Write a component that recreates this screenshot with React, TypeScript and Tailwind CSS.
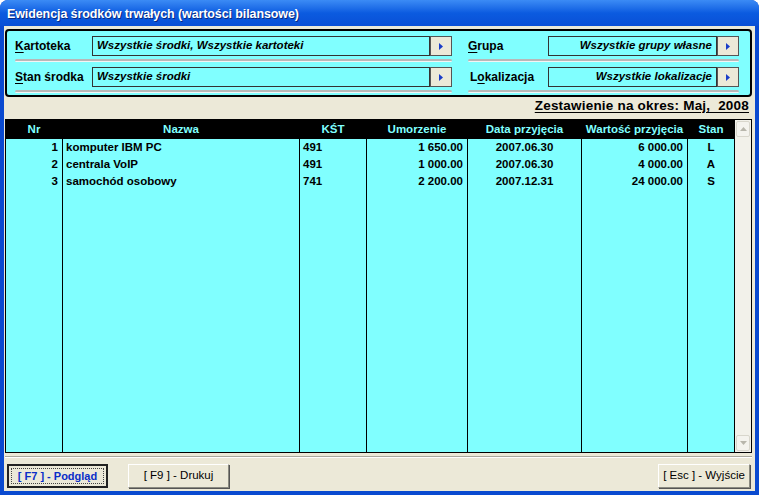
import React from "react";

const cols = [
  { title: "Nr", w: 57, align: "right", cells: ["1", "2", "3"] },
  { title: "Nazwa", w: 237, align: "left", cells: ["komputer IBM PC", "centrala VoIP", "samochód osobowy"] },
  { title: "KŚT", w: 67, align: "left", cells: ["491", "491", "741"] },
  { title: "Umorzenie", w: 101, align: "right", cells: ["1 650.00", "1 000.00", "2 200.00"] },
  { title: "Data przyjęcia", w: 114, align: "center", cells: ["2007.06.30", "2007.06.30", "2007.12.31"] },
  { title: "Wartość przyjęcia", w: 106, align: "right", cells: ["6 000.00", "4 000.00", "24 000.00"] },
  { title: "Stan", w: 47, align: "center", cells: ["L", "A", "S"] },
];

function Arrow() {
  return (
    <div className="w-[22px] h-[20px] border border-[#555] bg-[#ECE9D8] flex items-center justify-center shrink-0">
      <svg width="5" height="7" viewBox="0 0 5 7">
        <polygon points="0,0 4,3.5 0,7" fill="#1a3cc8" />
      </svg>
    </div>
  );
}

function Sep() {
  return <div className="mt-[3px] h-[3px] rounded-[2px] bg-[#b8b8b8] border-b border-[#f4f4f4]" />;
}

function Field({ ul, rest, value, labelW, right }: { ul: string; rest: string; value: string; labelW: number; right?: boolean }) {
  return (
    <div>
      <div className="flex h-[20px]">
        <div className="flex items-center text-[12px] font-bold text-black" style={{ width: labelW }}>
          <span className="underline underline-offset-[2px]">{ul}</span>
          <span>{rest}</span>
        </div>
        <div className={`flex-1 h-[20px] border border-[#333] flex items-center px-[4px] text-[11.5px] font-bold italic text-black ${right ? "justify-end" : "justify-start"}`}>
          {value}
        </div>
        <Arrow />
      </div>
      <Sep />
    </div>
  );
}

export default function App() {
  return (
    <div
      className="w-[759px] h-[495px] bg-[#0a4ad0] flex flex-col overflow-hidden rounded-t-[8px]"
      style={{ fontFamily: '"Liberation Sans", Arial, sans-serif' }}
    >
      <div className="h-[26px] shrink-0 bg-gradient-to-b from-[#3b8bf5] via-[#0b5be0] to-[#0a4fd6] flex items-center pl-[7px] pt-[3px]">
        <span className="text-white font-bold text-[12.5px] tracking-[-0.1px]" style={{ textShadow: "1px 1px 0 #0a2a80" }}>
          Ewidencja środków trwałych (wartości bilansowe)
        </span>
      </div>
      <div className="flex-1 mx-[4px] mb-[4px] bg-[#ECE9D8] flex flex-col">
        {/* filter panel */}
        <div className="mt-[3px] ml-[1px] mr-[3px] h-[68px] border-2 border-black rounded-[4px] bg-[#80FFFF] pl-[8px] pr-[11px] pt-[5px] flex gap-[16px]">
          <div className="w-[437px] flex flex-col gap-[5px]">
            <Field ul="K" rest="artoteka" value="Wszystkie środki, Wszystkie kartoteki" labelW={77} />
            <Field ul="S" rest="tan środka" value="Wszystkie środki" labelW={77} />
          </div>
          <div className="flex-1 flex flex-col gap-[5px]">
            <Field ul="G" rest="rupa" value="Wszystkie grupy własne" labelW={80} right />
            <div>
              <div className="flex h-[20px]">
                <div className="flex items-center text-[12px] font-bold text-black pl-[2px]" style={{ width: 80 }}>
                  <span>L</span>
                  <span className="underline underline-offset-[2px]">o</span>
                  <span>kalizacja</span>
                </div>
                <div className="flex-1 h-[20px] border border-[#333] flex items-center justify-end px-[4px] text-[11.5px] font-bold italic text-black">
                  Wszystkie lokalizacje
                </div>
                <Arrow />
              </div>
              <Sep />
            </div>
          </div>
        </div>

        {/* period */}
        <div className="h-[22px] flex items-end justify-end pr-[6px] pb-[3px]">
          <span className="text-[13.5px] font-bold text-black underline underline-offset-[2px] tracking-[0.2px]">
            Zestawienie na okres: Maj,&nbsp; 2008
          </span>
        </div>

        {/* table */}
        <div className="ml-[1px] mr-[3px] h-[334px] border border-black flex bg-[#80FFFF]">
          {cols.map((c, i) => (
            <div key={i} className="flex flex-col border-r border-black h-full" style={{ width: c.w }}>
              <div className="h-[19px] bg-black text-[#80FFFF] text-[11.5px] font-bold flex items-center justify-center whitespace-nowrap">
                {c.title}
              </div>
              {c.cells.map((t, j) => (
                <div
                  key={j}
                  className={`h-[17px] flex items-center text-[11.5px] font-bold text-black whitespace-nowrap ${
                    c.align === "right" ? "justify-end pr-[4px]" : c.align === "center" ? "justify-center" : "justify-start pl-[3px]"
                  }`}
                >
                  {t}
                </div>
              ))}
            </div>
          ))}
          <div className="flex-1 flex flex-col bg-[#f2f1ea] py-[1px] px-[1px]">
            <div className="h-[16px] rounded-[2px] border border-[#d8d6cc] bg-[#f4f3ee] flex items-center justify-center">
              <svg width="7" height="4" viewBox="0 0 7 4">
                <polygon points="0,4 3.5,0 7,4" fill="#b8b6ac" />
              </svg>
            </div>
            <div className="flex-1" />
            <div className="h-[16px] rounded-[2px] border border-[#d8d6cc] bg-[#f4f3ee] flex items-center justify-center">
              <svg width="7" height="4" viewBox="0 0 7 4">
                <polygon points="0,0 3.5,4 7,0" fill="#b8b6ac" />
              </svg>
            </div>
          </div>
        </div>

        {/* separator */}
        <div className="mt-[3px] ml-[1px] mr-[3px] h-[2px] border-t border-[#a8a79c] border-b border-b-white" />

        {/* buttons */}
        <div className="flex items-center mt-[6px] pl-[3px] pr-[5px]">
          <div className="w-[101px] h-[24px] border-2 border-[#222] bg-[#ECE9D8] p-[2px] flex">
            <div className="flex-1 border border-dotted border-[#444] flex items-center justify-center text-[11px] font-bold text-[#0a2ec8]">
              [ F7 ] - Podgląd
            </div>
          </div>
          <div className="ml-[20px] w-[101px] h-[24px] border border-[#8a8a80] border-t-white border-l-white bg-[#ECE9D8] flex items-center justify-center text-[11.5px] text-black shadow-[1px_1px_0_#555]">
            [ F9 ] - Drukuj
          </div>
          <div className="flex-1" />
          <div className="w-[92px] h-[24px] border border-[#8a8a80] border-t-white border-l-white bg-[#ECE9D8] flex items-center justify-center text-[11.5px] text-black shadow-[1px_1px_0_#555]">
            [ Esc ] - Wyjście
          </div>
        </div>
      </div>
    </div>
  );
}
